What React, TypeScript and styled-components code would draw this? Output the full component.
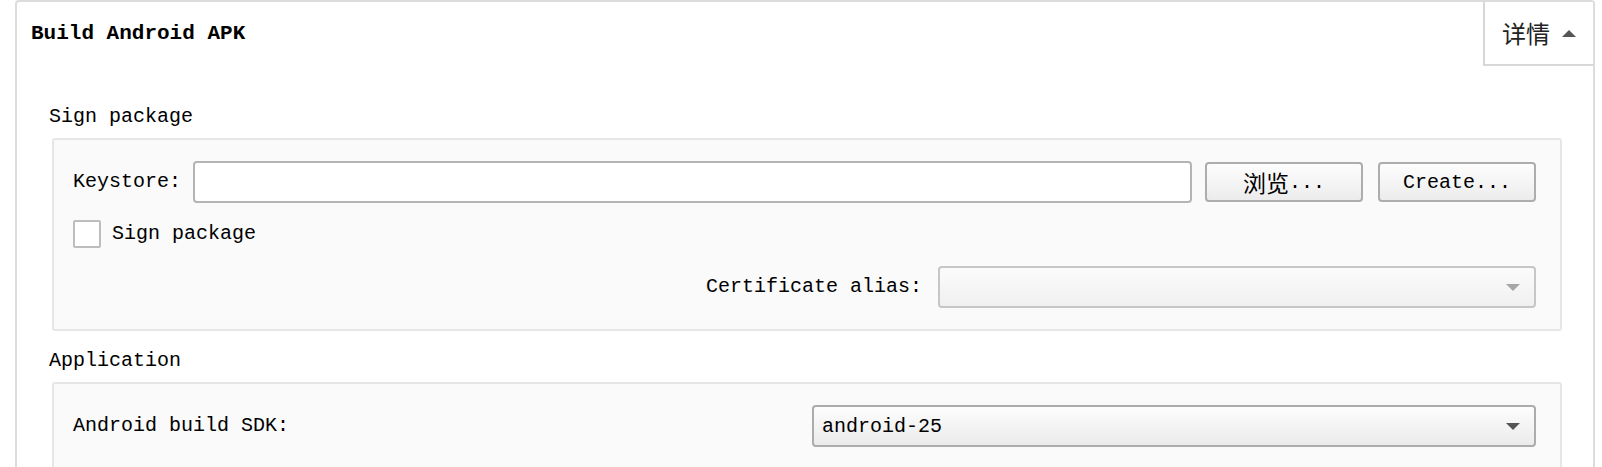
import styled, { createGlobalStyle } from 'styled-components';

const GlobalStyle = createGlobalStyle`
  html, body {
    margin: 0;
    padding: 0;
    background: #ffffff;
  }
  body {
    font-family: "Liberation Mono", "Noto Sans CJK SC", monospace;
    font-size: 20px;
    color: #000000;
    overflow: hidden;
  }
`;

const Panel = styled.div`
  margin: 0 7px 0 15px;
  border: 2px solid #dcdcdc;
  border-bottom: none;
  border-radius: 4px 4px 0 0;
  min-height: 520px;
  background: #ffffff;
`;

const Header = styled.div`
  display: flex;
  align-items: flex-start;
  justify-content: space-between;
  height: 64px;
`;

const Title = styled.h1`
  margin: 0;
  padding: 19px 0 0 14px;
  font-size: 21px;
  line-height: 26px;
  font-weight: bold;
  font-family: "Liberation Mono", monospace;
`;

const DetailsTab = styled.button`
  display: flex;
  align-items: center;
  gap: 12px;
  box-sizing: border-box;
  width: 110px;
  height: 64px;
  margin: 0;
  padding: 0 0 0 17px;
  background: #ffffff;
  border: none;
  border-left: 2px solid #d8d8d8;
  border-bottom: 2px solid #d8d8d8;
  color: #222222;
  font: inherit;
  cursor: pointer;
`;

const Cjk = styled.span<{ $size?: number }>`
  font-family: "Noto Sans CJK SC", sans-serif;
  font-size: ${p => p.$size ?? 23}px;
  line-height: 1;
`;

const Triangle = styled.span<{ $dir: 'up' | 'down'; $color: string }>`
  display: inline-block;
  width: 0;
  height: 0;
  border-left: 7.5px solid transparent;
  border-right: 7.5px solid transparent;
  ${p => p.$dir === 'up'
    ? `border-bottom: 7px solid ${p.$color};`
    : `border-top: 7px solid ${p.$color};`}
`;

const Body = styled.div`
  padding: 39px 31px 0 32px;
  display: flex;
  flex-direction: column;
  gap: 18px;
`;

const Section = styled.section`
  display: flex;
  flex-direction: column;
  gap: 9px;
`;

const SectionLabel = styled.div`
  line-height: 24px;
  height: 24px;
`;

const GroupBox = styled.div`
  margin-left: 3px;
  border: 2px solid #e6e6e6;
  border-radius: 3px;
  background: #fafafa;
  padding: 21px 24px 21px 19px;
  display: flex;
  flex-direction: column;
`;

const Row = styled.div<{ $gap?: number; $top?: number; $end?: boolean }>`
  display: flex;
  align-items: center;
  gap: ${p => p.$gap ?? 12}px;
  margin-top: ${p => p.$top ?? 0}px;
  justify-content: ${p => (p.$end ? 'flex-end' : 'flex-start')};
`;

const Label = styled.label`
  line-height: 24px;
  white-space: nowrap;
`;

const TextInput = styled.input`
  flex: 0 0 999px;
  box-sizing: border-box;
  height: 42px;
  border: 2px solid #b4b4b4;
  border-radius: 4px;
  background: #ffffff;
  padding: 0 8px;
  font: inherit;
  outline: none;
`;

const Buttons = styled.div`
  display: flex;
  gap: 15px;
  margin-left: 1px;
`;

const Button = styled.button`
  box-sizing: border-box;
  width: 158px;
  height: 40px;
  border: 2px solid #adadad;
  border-radius: 4px;
  background: linear-gradient(#fdfdfd, #ececec);
  font: inherit;
  color: #000000;
  padding: 0;
  display: flex;
  align-items: center;
  justify-content: center;
`;

const CheckBox = styled.span`
  box-sizing: border-box;
  width: 28px;
  height: 28px;
  border: 2px solid #bdbdbd;
  border-radius: 2px;
  background: #ffffff;
`;

const Dropdown = styled.div<{ $width: number; $disabled?: boolean }>`
  box-sizing: border-box;
  width: ${p => p.$width}px;
  height: 42px;
  border: 2px solid ${p => (p.$disabled ? '#c6c6c6' : '#acacac')};
  border-radius: 4px;
  background: ${p => (p.$disabled
    ? 'linear-gradient(#fbfbfb, #f0f0f0)'
    : 'linear-gradient(#fdfdfd, #ebebeb)')};
  display: flex;
  align-items: center;
  justify-content: space-between;
  padding: 0 14px 0 8px;
  color: ${p => (p.$disabled ? '#8c8c8c' : '#000000')};
`;

const SpreadRow = styled(Row)`
  justify-content: space-between;
`;

export default function App() {
  return (
    <>
      <GlobalStyle />
      <Panel>
        <Header>
          <Title>Build Android APK</Title>
          <DetailsTab>
            <Cjk $size={24}>详情</Cjk>
            <Triangle $dir="up" $color="#555555" />
          </DetailsTab>
        </Header>
        <Body>
          <Section>
            <SectionLabel>Sign package</SectionLabel>
            <GroupBox>
              <Row $gap={12}>
                <Label>Keystore:</Label>
                <TextInput />
                <Buttons>
                  <Button><Cjk>浏览</Cjk>...</Button>
                  <Button>Create...</Button>
                </Buttons>
              </Row>
              <Row $gap={11} $top={17}>
                <CheckBox />
                <Label>Sign package</Label>
              </Row>
              <Row $gap={16} $top={18} $end>
                <Label>Certificate alias:</Label>
                <Dropdown $width={598} $disabled>
                  <span />
                  <Triangle $dir="down" $color="#a6a6a6" />
                </Dropdown>
              </Row>
            </GroupBox>
          </Section>
          <Section>
            <SectionLabel>Application</SectionLabel>
            <GroupBox>
              <SpreadRow>
                <Label>Android build SDK:</Label>
                <Dropdown $width={724}>
                  <span>android-25</span>
                  <Triangle $dir="down" $color="#555555" />
                </Dropdown>
              </SpreadRow>
              <Row $top={40} />
            </GroupBox>
          </Section>
        </Body>
      </Panel>
    </>
  );
}
